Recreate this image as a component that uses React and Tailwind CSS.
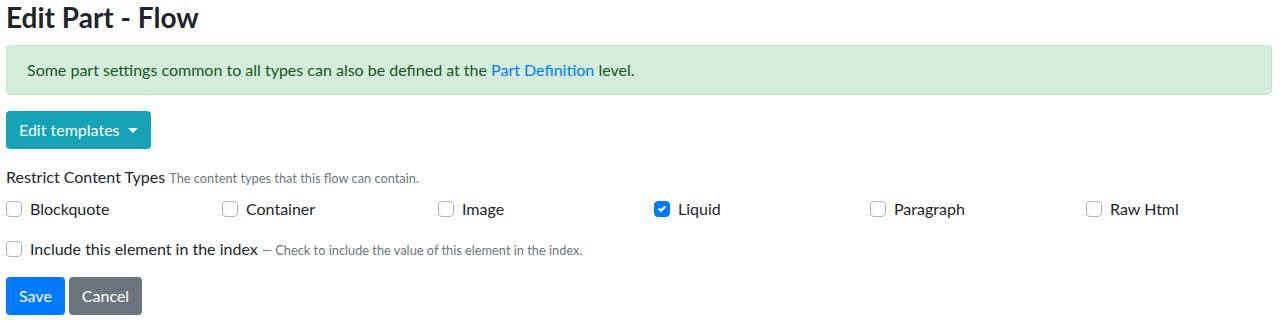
import { useState } from "react";

const types = ["Blockquote", "Container", "Image", "Liquid", "Paragraph", "Raw Html"];

const Check = ({ checked, onChange }) => {
  return (
    <span
      onClick={onChange}
      className={
        "absolute left-0 top-[4px] w-4 h-4 rounded-[4px] border flex items-center justify-center cursor-pointer " +
        (checked ? "bg-[#007bff] border-[#007bff]" : "bg-white border-[#adb5bd]")
      }
    >
      {checked && (
        <svg width="8" height="8" viewBox="0 0 8 8">
          <path fill="#fff" d="M6.564.75l-3.59 3.612-1.538-1.55L0 4.26l2.974 2.99L8 2.193z" />
        </svg>
      )}
    </span>
  );
};

const App = () => {
  const [selected, setSelected] = useState(["Liquid"]);
  const [indexed, setIndexed] = useState(false);

  const toggle = (name) => {
    setSelected((prev) =>
      prev.includes(name) ? prev.filter((v) => v !== name) : [...prev, name]
    );
  };

  return (
    <div className="pl-[6px] pr-[10px] font-['Lato','Noto_Sans',sans-serif] text-[16px] leading-[24px] text-[#212529] bg-white">
      <h3 className="text-[28px] leading-[34px] font-bold mb-[11px]">Edit Part - Flow</h3>

      <div className="border border-[#c3e6cb] bg-[#d4edda] text-[#155724] rounded-[4px] px-5 py-3 mb-4">
        Some part settings common to all types can also be defined at the{" "}
        <a href="#" className="text-[#007bff]">
          Part Definition
        </a>{" "}
        level.
      </div>

      <div className="mb-4">
        <button className="bg-[#17a2b8] text-white rounded-[4px] h-[38px] px-[13px] flex items-center">
          Edit templates
          <span className="ml-[8px] mt-[1px] w-0 h-0 border-t-[5px] border-t-white border-x-[5px] border-x-transparent" />
        </button>
      </div>

      <div className="mb-4">
        <div className="mb-2 h-6">
          Restrict Content Types{" "}
          <span className="text-[12.8px] leading-none text-[#6c757d]">
            The content types that this flow can contain.
          </span>
        </div>
        <div className="grid grid-cols-6 -mx-[15px]">
          {types.map((t) => (
            <div key={t} className="px-[15px]">
              <label className="relative block pl-6 h-6">
                <Check checked={selected.includes(t)} onChange={() => toggle(t)} />
                {t}
              </label>
            </div>
          ))}
        </div>
      </div>

      <div className="mb-4">
        <label className="relative block pl-6 h-6">
          <Check checked={indexed} onChange={() => setIndexed(!indexed)} />
          Include this element in the index{" "}
          <span className="text-[12.8px] leading-none text-[#6c757d]">
            — Check to include the value of this element in the index.
          </span>
        </label>
      </div>

      <div className="flex gap-1">
        <button className="bg-[#007bff] text-white rounded-[4px] h-[38px] px-[13px]">Save</button>
        <button className="bg-[#6c757d] text-white rounded-[4px] h-[38px] px-[13px]">Cancel</button>
      </div>
    </div>
  );
};

export default App;
